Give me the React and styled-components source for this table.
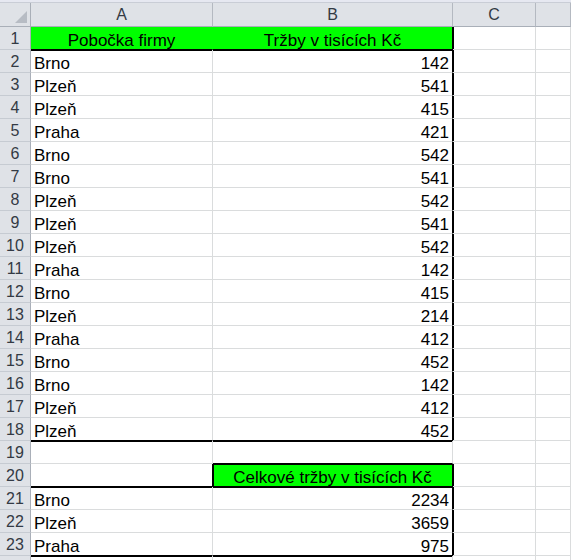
import React from 'react';
import styled, { createGlobalStyle } from 'styled-components';

const Global = createGlobalStyle`
  html, body { margin: 0; padding: 0; background: #fff; }
  body { font-family: "Liberation Sans", Arial, sans-serif; }
`;

const Frame = styled.div`
  width: 571px;
  height: 560px;
  overflow: hidden;
  background: #fff;
`;

const TopStrip = styled.div`
  height: 2px;
  background: #e6e8f1;
  border-bottom: 1px solid #c9cdd6;
`;

const Sheet = styled.div`
  display: grid;
  grid-template-columns: 31px 182px 240px 83px 1fr;
  grid-template-rows: 24px;
  grid-auto-rows: 23px;
`;

const Corner = styled.div`
  background: #dfe2e7;
  border-right: 1px solid #a9afb8;
  border-bottom: 1px solid #a9afb8;
  display: flex;
  align-items: flex-end;
  justify-content: flex-end;
  padding: 0 3px 3px 0;
  box-sizing: border-box;
`;

const ColHeader = styled.div`
  background: #dfe2e7;
  border-right: 1px solid #b4b9c1;
  border-bottom: 1px solid #a9afb8;
  box-sizing: border-box;
  display: flex;
  align-items: center;
  justify-content: center;
  font-size: 16px;
  color: #333a44;
  padding-top: 1px;
`;

const RowHeader = styled.div`
  background: #dfe2e7;
  border-right: 1px solid #a9afb8;
  border-bottom: 1px solid #c6cbd2;
  box-sizing: border-box;
  display: flex;
  align-items: flex-end;
  justify-content: center;
  font-size: 16px;
  line-height: 16px;
  padding-bottom: 2px;
  color: #333a44;
`;

const Cell = styled.div`
  box-sizing: border-box;
  background: ${p => (p.$green ? '#00ff00' : '#fff')};
  border-right: 1px solid ${p => (p.$tr ? '#000' : p.$greenJoin ? '#00ff00' : '#dadcdd')};
  border-bottom: 1px solid ${p => (p.$tb ? '#000' : '#dadcdd')};
  box-shadow: ${p => {
    const s = [];
    if (p.$tt) s.push('inset 0 1px 0 #000');
    if (p.$tl) s.push('inset 1px 0 0 #000');
    return s.length ? s.join(', ') : 'none';
  }};
  display: flex;
  align-items: flex-end;
  justify-content: ${p => (p.$align === 'right' ? 'flex-end' : p.$align === 'center' ? 'center' : 'flex-start')};
  padding: 0 3px 0 3px;
  font-size: 17px;
  line-height: 16px;
  color: #000;
  white-space: nowrap;
`;

const Tri = () => (
  <svg width="12" height="12" viewBox="0 0 12 12">
    <polygon points="12,0 12,12 0,12" fill="#b7bcc4" />
  </svg>
);

const data = [
  ['Brno', 142], ['Plzeň', 541], ['Plzeň', 415], ['Praha', 421], ['Brno', 542],
  ['Brno', 541], ['Plzeň', 542], ['Plzeň', 541], ['Plzeň', 542], ['Praha', 142],
  ['Brno', 415], ['Plzeň', 214], ['Praha', 412], ['Brno', 452], ['Brno', 142],
  ['Plzeň', 412], ['Plzeň', 452],
];

const rows = [];
rows.push({ a: { text: 'Pobočka firmy', align: 'center', green: true }, b: { text: 'Tržby v tisících Kč', align: 'center', green: true } });
data.forEach(([c, v]) => rows.push({ a: { text: c }, b: { text: String(v), align: 'right' } }));
rows.push({ a: {}, b: {} });
rows.push({ a: {}, b: { text: 'Celkové tržby v tisících Kč', align: 'center', green: true } });
[['Brno', 2234], ['Plzeň', 3659], ['Praha', 975]].forEach(([c, v]) => rows.push({ a: { text: c }, b: { text: String(v), align: 'right' } }));
rows.push({ a: {}, b: {}, noLabel: true });

const thick = {};
const set = (r, c, k) => { const key = `${r},${c}`; thick[key] = { ...(thick[key] || {}), [k]: true }; };
set(1, 0, 'b'); set(1, 1, 'b');
for (let r = 1; r <= 18; r++) set(r, 1, 'r');
set(18, 0, 'b'); set(18, 1, 'b');
set(19, 1, 'b');
set(20, 0, 'r'); set(20, 0, 'b'); set(20, 1, 'b');
for (let r = 20; r <= 23; r++) set(r, 1, 'r');
set(23, 0, 'b'); set(23, 1, 'b');

const has = (r, c, k) => !!(thick[`${r},${c}`] && thick[`${r},${c}`][k]);

export default function App() {
  return (
    <Frame>
      <Global />
      <TopStrip />
      <Sheet>
        <Corner><Tri /></Corner>
        {['A', 'B', 'C', 'D'].map(l => <ColHeader key={l}>{l === 'D' ? '' : l}</ColHeader>)}
        {rows.map((row, i) => {
          const r = i + 1;
          const specs = [row.a, row.b, {}, {}];
          return (
            <React.Fragment key={r}>
              <RowHeader>{row.noLabel ? '' : r}</RowHeader>
              {specs.map((s, c) => (
                <Cell
                  key={c}
                  $align={s.align}
                  $green={s.green}
                  $greenJoin={s.green && specs[c + 1] && specs[c + 1].green}
                  $tb={has(r, c, 'b')}
                  $tr={has(r, c, 'r')}
                  $tt={has(r - 1, c, 'b')}
                  $tl={c > 0 && has(r, c - 1, 'r')}
                >
                  {s.text || ''}
                </Cell>
              ))}
            </React.Fragment>
          );
        })}
      </Sheet>
    </Frame>
  );
}
